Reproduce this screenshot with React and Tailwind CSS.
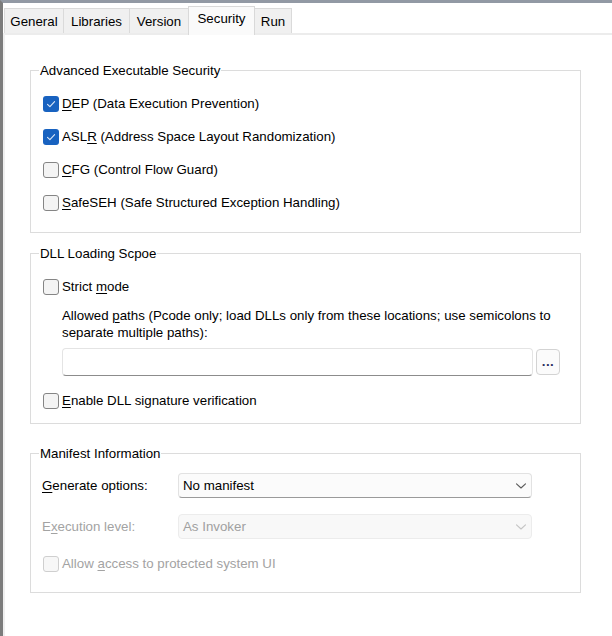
import React from "react";

const Check = ({ checked, disabled }) => {
  if (checked) {
    return (
      <span className="w-[16px] h-[16px] rounded-[3px] bg-[#1862c0] flex items-center justify-center shrink-0">
        <svg width="12" height="12" viewBox="0 0 12 12" fill="none">
          <path d="M2.5 6.3 L4.9 8.6 L9.6 3.6" stroke="#dbe8f8" strokeWidth="1.1" strokeLinecap="round" strokeLinejoin="round" />
        </svg>
      </span>
    );
  }
  return (
    <span
      className={
        disabled
          ? "w-[16px] h-[16px] rounded-[3px] border border-[#cfcfcf] bg-[#f7f7f7] shrink-0"
          : "w-[16px] h-[16px] rounded-[3px] border border-[#858585] bg-[#f4f4f4] shrink-0"
      }
    />
  );
};

const CheckRow = ({ checked, disabled, children }) => (
  <div className="h-[33px] flex items-center">
    <Check checked={checked} disabled={disabled} />
    <span className={disabled ? "ml-[3px] text-[#a3a3a3]" : "ml-[3px] text-black"}>{children}</span>
  </div>
);

const Key = ({ children }) => <span className="underline underline-offset-2 decoration-1">{children}</span>;

const Chevron = ({ color }) => (
  <svg width="12" height="8" viewBox="0 0 12 8" fill="none">
    <path d="M1.5 1.8 L6 6 L10.5 1.8" stroke={color} strokeWidth="1.1" strokeLinecap="round" strokeLinejoin="round" />
  </svg>
);

const tabs = [
  { name: "General", w: "w-[60px]" },
  { name: "Libraries", w: "w-[67px]" },
  { name: "Version", w: "w-[60px]" },
  { name: "Security", w: "w-[67px]", active: true },
  { name: "Run", w: "w-[38px]" },
];

export default function App() {
  return (
    <div className="w-[612px] h-[636px] bg-white border-t-[3px] border-t-[#9299a4] border-l-[3px] border-l-[#7c7c7c] flex flex-col text-[13.3px] leading-[17px] text-black font-['Liberation_Sans',sans-serif] overflow-hidden">
      {/* tab strip */}
      <div className="h-[30px] flex items-end pl-[1px]">
        {tabs.map((t) =>
          t.active ? (
            <div
              key={t.name}
              className={`${t.w} h-[29px] -mb-[2px] relative z-10 bg-[#fafafa] border border-b-0 border-[#d9d9d9] flex items-start justify-center pt-[3px] -ml-px`}
            >
              {t.name}
            </div>
          ) : (
            <div
              key={t.name}
              className={`${t.w} h-[25px] bg-[#f0f0f0] border border-b-0 border-[#dadada] flex items-center justify-center -ml-px first:ml-0`}
            >
              {t.name}
            </div>
          )
        )}
      </div>

      {/* panel */}
      <div className="flex-1 border-t-2 border-t-[#ececec] border-l-2 border-l-[#efefef] pl-[25px] pt-[27px]">
        <fieldset className="w-[551px] border border-[#dcdcdc] pl-[12px] pt-[8px] pb-[13px]">
          <legend className="-ml-[4px] px-[1px]">Advanced Executable Security</legend>
          <CheckRow checked>
            <Key>D</Key>EP (Data Execution Prevention)
          </CheckRow>
          <CheckRow checked>
            ASL<Key>R</Key> (Address Space Layout Randomization)
          </CheckRow>
          <CheckRow>
            <Key>C</Key>FG (Control Flow Guard)
          </CheckRow>
          <CheckRow>
            <Key>S</Key>afeSEH (Safe Structured Exception Handling)
          </CheckRow>
        </fieldset>

        <fieldset className="w-[551px] mt-[12px] border border-[#dcdcdc] pl-[12px] pt-[8px] pb-[6px]">
          <legend className="-ml-[4px] px-[1px]">DLL Loading Scpoe</legend>
          <CheckRow>
            Strict <Key>m</Key>ode
          </CheckRow>
          <div className="ml-[19px] mt-[4px] whitespace-nowrap">
            <div>
              Allowed <Key>p</Key>aths (Pcode only; load DLLs only from these locations; use semicolons to
            </div>
            <div>separate multiple paths):</div>
          </div>
          <div className="ml-[19px] mt-[7px] flex items-center gap-[3px]">
            <div className="w-[471px] h-[28px] rounded-[4px] border border-[#e4e4e4] border-b-[#8c8c8c] bg-white" />
            <button className="w-[24px] h-[26px] rounded-[4px] border border-[#d3d3d3] bg-[#fbfbfb] text-[#2c2c5c] font-bold leading-[20px] tracking-[0.5px]">
              ...
            </button>
          </div>
          <div className="mt-[8px]">
            <CheckRow>
              <Key>E</Key>nable DLL signature verification
            </CheckRow>
          </div>
        </fieldset>

        <fieldset className="w-[551px] mt-[21px] border border-[#dcdcdc] pl-[11px] pt-[11px] pb-[12px]">
          <legend className="-ml-[3px] px-[1px]">Manifest Information</legend>
          <div className="flex items-center">
            <span className="w-[136px]">
              <Key>G</Key>enerate options:
            </span>
            <div className="w-[354px] h-[25px] rounded-[4px] border border-[#e2e2e2] border-b-[#9a9a9a] bg-[#fbfbfb] flex items-center justify-between pl-[4px] pr-[4px]">
              <span>No manifest</span>
              <Chevron color="#5a5a5a" />
            </div>
          </div>
          <div className="flex items-center mt-[16px]">
            <span className="w-[136px] text-[#a3a3a3]">
              E<Key>x</Key>ecution level:
            </span>
            <div className="w-[354px] h-[25px] rounded-[4px] border border-[#ececec] bg-[#f8f8f8] flex items-center justify-between pl-[4px] pr-[4px] text-[#a0a0a0]">
              <span>As Invoker</span>
              <Chevron color="#c4c4c4" />
            </div>
          </div>
          <div className="mt-[8px] pl-[1px]">
            <CheckRow disabled>
              Allow <Key>a</Key>ccess to protected system UI
            </CheckRow>
          </div>
        </fieldset>
      </div>
    </div>
  );
}
